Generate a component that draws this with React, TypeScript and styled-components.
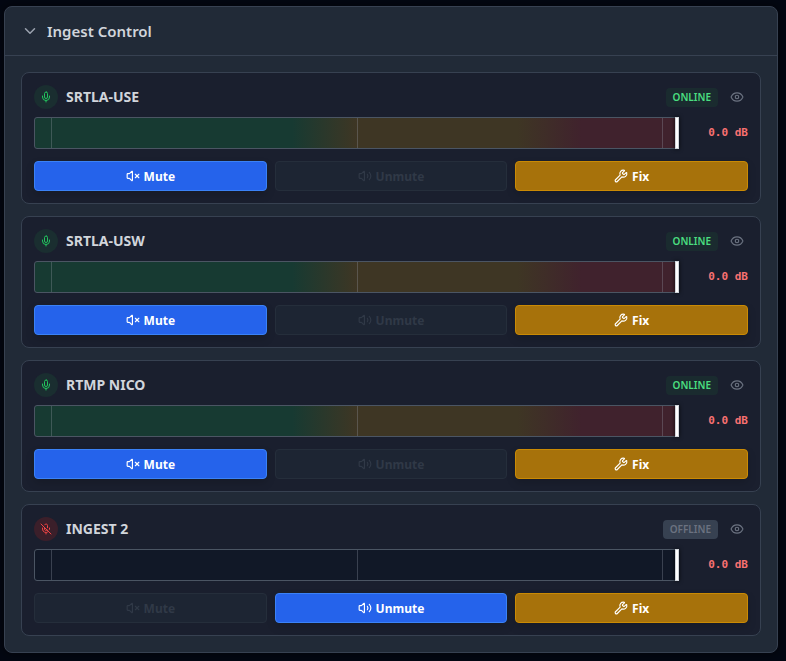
import React, { useId, useState } from "react";
import styled, { createGlobalStyle, css } from "styled-components";
import { ChevronDown, Eye, Mic, MicOff, Volume2, VolumeX, Wrench } from "lucide-react";

const GlobalStyle = createGlobalStyle`
  *, *::before, *::after { box-sizing: border-box; }
  body {
    margin: 0;
    background: #030712;
    color: #d1d5db;
    font-family: "Noto Sans", "Open Sans", sans-serif;
  }
  button { font-family: inherit; }
`;

const Page = styled.main`
  padding: 6px 8px 8px 4px;
`;

const Panel = styled.section`
  background: #212a37;
  border: 1px solid #374151;
  border-radius: 8px;
  box-shadow: 0 0 12px rgba(0, 0, 0, 0.6);
`;

const PanelHeader = styled.header`
  border-bottom: 1px solid #374151;
`;

const PanelTitle = styled.h2`
  margin: 0;
`;

const PanelToggle = styled.button`
  display: flex;
  align-items: center;
  gap: 8px;
  width: 100%;
  height: 48px;
  padding: 0 16px;
  border: 0;
  background: transparent;
  color: #d1d5db;
  font-size: 15px;
  line-height: 24px;
  font-weight: 600;
  text-align: left;
  cursor: pointer;

  svg { color: #9ca3af; }
`;

const IngestList = styled.ul`
  display: flex;
  flex-direction: column;
  gap: 12px;
  margin: 0;
  padding: 16px;
  list-style: none;
`;

const IngestCard = styled.li`
  padding: 12px;
  background: #1a1f2e;
  border: 1px solid #374151;
  border-radius: 8px;
`;

const CardHeader = styled.div`
  display: flex;
  align-items: center;
  gap: 8px;
  height: 24px;
  margin-bottom: 8px;
`;

const MicBadge = styled.span<{ $online: boolean }>`
  display: grid;
  place-items: center;
  width: 24px;
  height: 24px;
  border-radius: 50%;
  color: ${(p) => (p.$online ? "#22c55e" : "#ef4444")};
  background: ${(p) => (p.$online ? "#1a2e30" : "#3b1f2a")};
`;

const IngestName = styled.h3`
  flex: 1;
  margin: 0;
  color: #d1d5db;
  font-size: 14px;
  line-height: 20px;
  font-weight: 700;
`;

const Status = styled.span<{ $online: boolean }>`
  padding: 2px 7px;
  border-radius: 4px;
  font-size: 10px;
  line-height: 15px;
  font-weight: 600;
  color: ${(p) => (p.$online ? "#4ade80" : "#6b7280")};
  background: ${(p) => (p.$online ? "#1a2b2f" : "#374151")};
`;

const ViewButton = styled.button`
  display: grid;
  place-items: center;
  width: 22px;
  height: 22px;
  padding: 0;
  border: 0;
  background: transparent;
  color: #6b7280;
  cursor: pointer;
`;

const MeterRow = styled.div`
  display: grid;
  grid-template-columns: 1fr 57px;
  align-items: center;
  gap: 12px;
  margin-bottom: 12px;
`;

const Meter = styled.div<{ $online: boolean }>`
  position: relative;
  height: 32px;
  border: 1px solid #4b5563;
  border-radius: 3px;
  background: ${(p) =>
    p.$online
      ? "linear-gradient(90deg, #173a32 40%, #3e3624 50%, #3e3624 75%, #40222d 85%)"
      : "#111827"};
`;

const Tick = styled.span<{ $at: number }>`
  position: absolute;
  top: 0;
  bottom: 0;
  left: ${(p) => p.$at}%;
  width: 1px;
  background: rgba(156, 163, 175, 0.3);
`;

const Peak = styled.span`
  position: absolute;
  top: -1px;
  bottom: -1px;
  right: -1px;
  width: 4px;
  background: #ffffff;
  border: 1px solid #d1d5db;
  box-shadow: 0 0 4px rgba(0, 0, 0, 0.8);
`;

const Level = styled.output`
  color: #f87171;
  font-family: "DejaVu Sans Mono", monospace;
  font-size: 11px;
  line-height: 16px;
  font-weight: 700;
  text-align: right;
  white-space: nowrap;
`;

const Actions = styled.div`
  display: grid;
  grid-template-columns: repeat(3, 1fr);
  gap: 8px;
`;

const tones = {
  primary: css`
    background: #2563eb;
    border-color: #3b82f6;
  `,
  warning: css`
    background: #a7720b;
    border-color: #ca8a04;
  `,
};

const ActionButton = styled.button<{ $tone: keyof typeof tones }>`
  display: flex;
  align-items: center;
  justify-content: center;
  gap: 4px;
  height: 30px;
  padding: 0 12px;
  border: 1px solid;
  border-radius: 4px;
  color: #ffffff;
  font-size: 12px;
  line-height: 17px;
  font-weight: 700;
  box-shadow: 0 4px 8px rgba(0, 0, 0, 0.15);
  cursor: pointer;
  ${(p) => tones[p.$tone]}

  &:disabled {
    color: #303947;
    background: #1d2533;
    border-color: #252e3b;
    box-shadow: none;
    cursor: not-allowed;
  }
`;

type Ingest = { name: string; online: boolean; level: number };

const ingests: Ingest[] = [
  { name: "SRTLA-USE", online: true, level: 0 },
  { name: "SRTLA-USW", online: true, level: 0 },
  { name: "RTMP NICO", online: true, level: 0 },
  { name: "INGEST 2", online: false, level: 0 },
];

const tickPositions = [2.5, 50, 97.5];

function IngestItem({ ingest }: { ingest: Ingest }) {
  const [live, setLive] = useState(ingest.online);
  const MicIcon = live ? Mic : MicOff;
  return (
    <IngestCard>
      <CardHeader>
        <MicBadge $online={live}>
          <MicIcon size={12} />
        </MicBadge>
        <IngestName>{ingest.name}</IngestName>
        <Status $online={ingest.online}>{ingest.online ? "ONLINE" : "OFFLINE"}</Status>
        <ViewButton type="button" aria-label={`Preview ${ingest.name}`}>
          <Eye size={14} />
        </ViewButton>
      </CardHeader>
      <MeterRow>
        <Meter $online={ingest.online} role="img" aria-label={`${ingest.name} audio level`}>
          {tickPositions.map((at) => (
            <Tick key={at} $at={at} />
          ))}
          <Peak />
        </Meter>
        <Level>{ingest.level.toFixed(1)} dB</Level>
      </MeterRow>
      <Actions>
        <ActionButton type="button" $tone="primary" disabled={!live} onClick={() => setLive(false)}>
          <VolumeX size={14} />
          Mute
        </ActionButton>
        <ActionButton type="button" $tone="primary" disabled={live} onClick={() => setLive(true)}>
          <Volume2 size={14} />
          Unmute
        </ActionButton>
        <ActionButton type="button" $tone="warning">
          <Wrench size={14} />
          Fix
        </ActionButton>
      </Actions>
    </IngestCard>
  );
}

export default function App() {
  const [open, setOpen] = useState(true);
  const listId = useId();
  return (
    <>
      <GlobalStyle />
      <Page>
        <Panel>
          <PanelHeader>
            <PanelTitle>
              <PanelToggle
                type="button"
                aria-expanded={open}
                aria-controls={listId}
                onClick={() => setOpen(!open)}
              >
                <ChevronDown size={18} />
                Ingest Control
              </PanelToggle>
            </PanelTitle>
          </PanelHeader>
          {open && (
            <IngestList id={listId}>
              {ingests.map((ingest) => (
                <IngestItem key={ingest.name} ingest={ingest} />
              ))}
            </IngestList>
          )}
        </Panel>
      </Page>
    </>
  );
}
